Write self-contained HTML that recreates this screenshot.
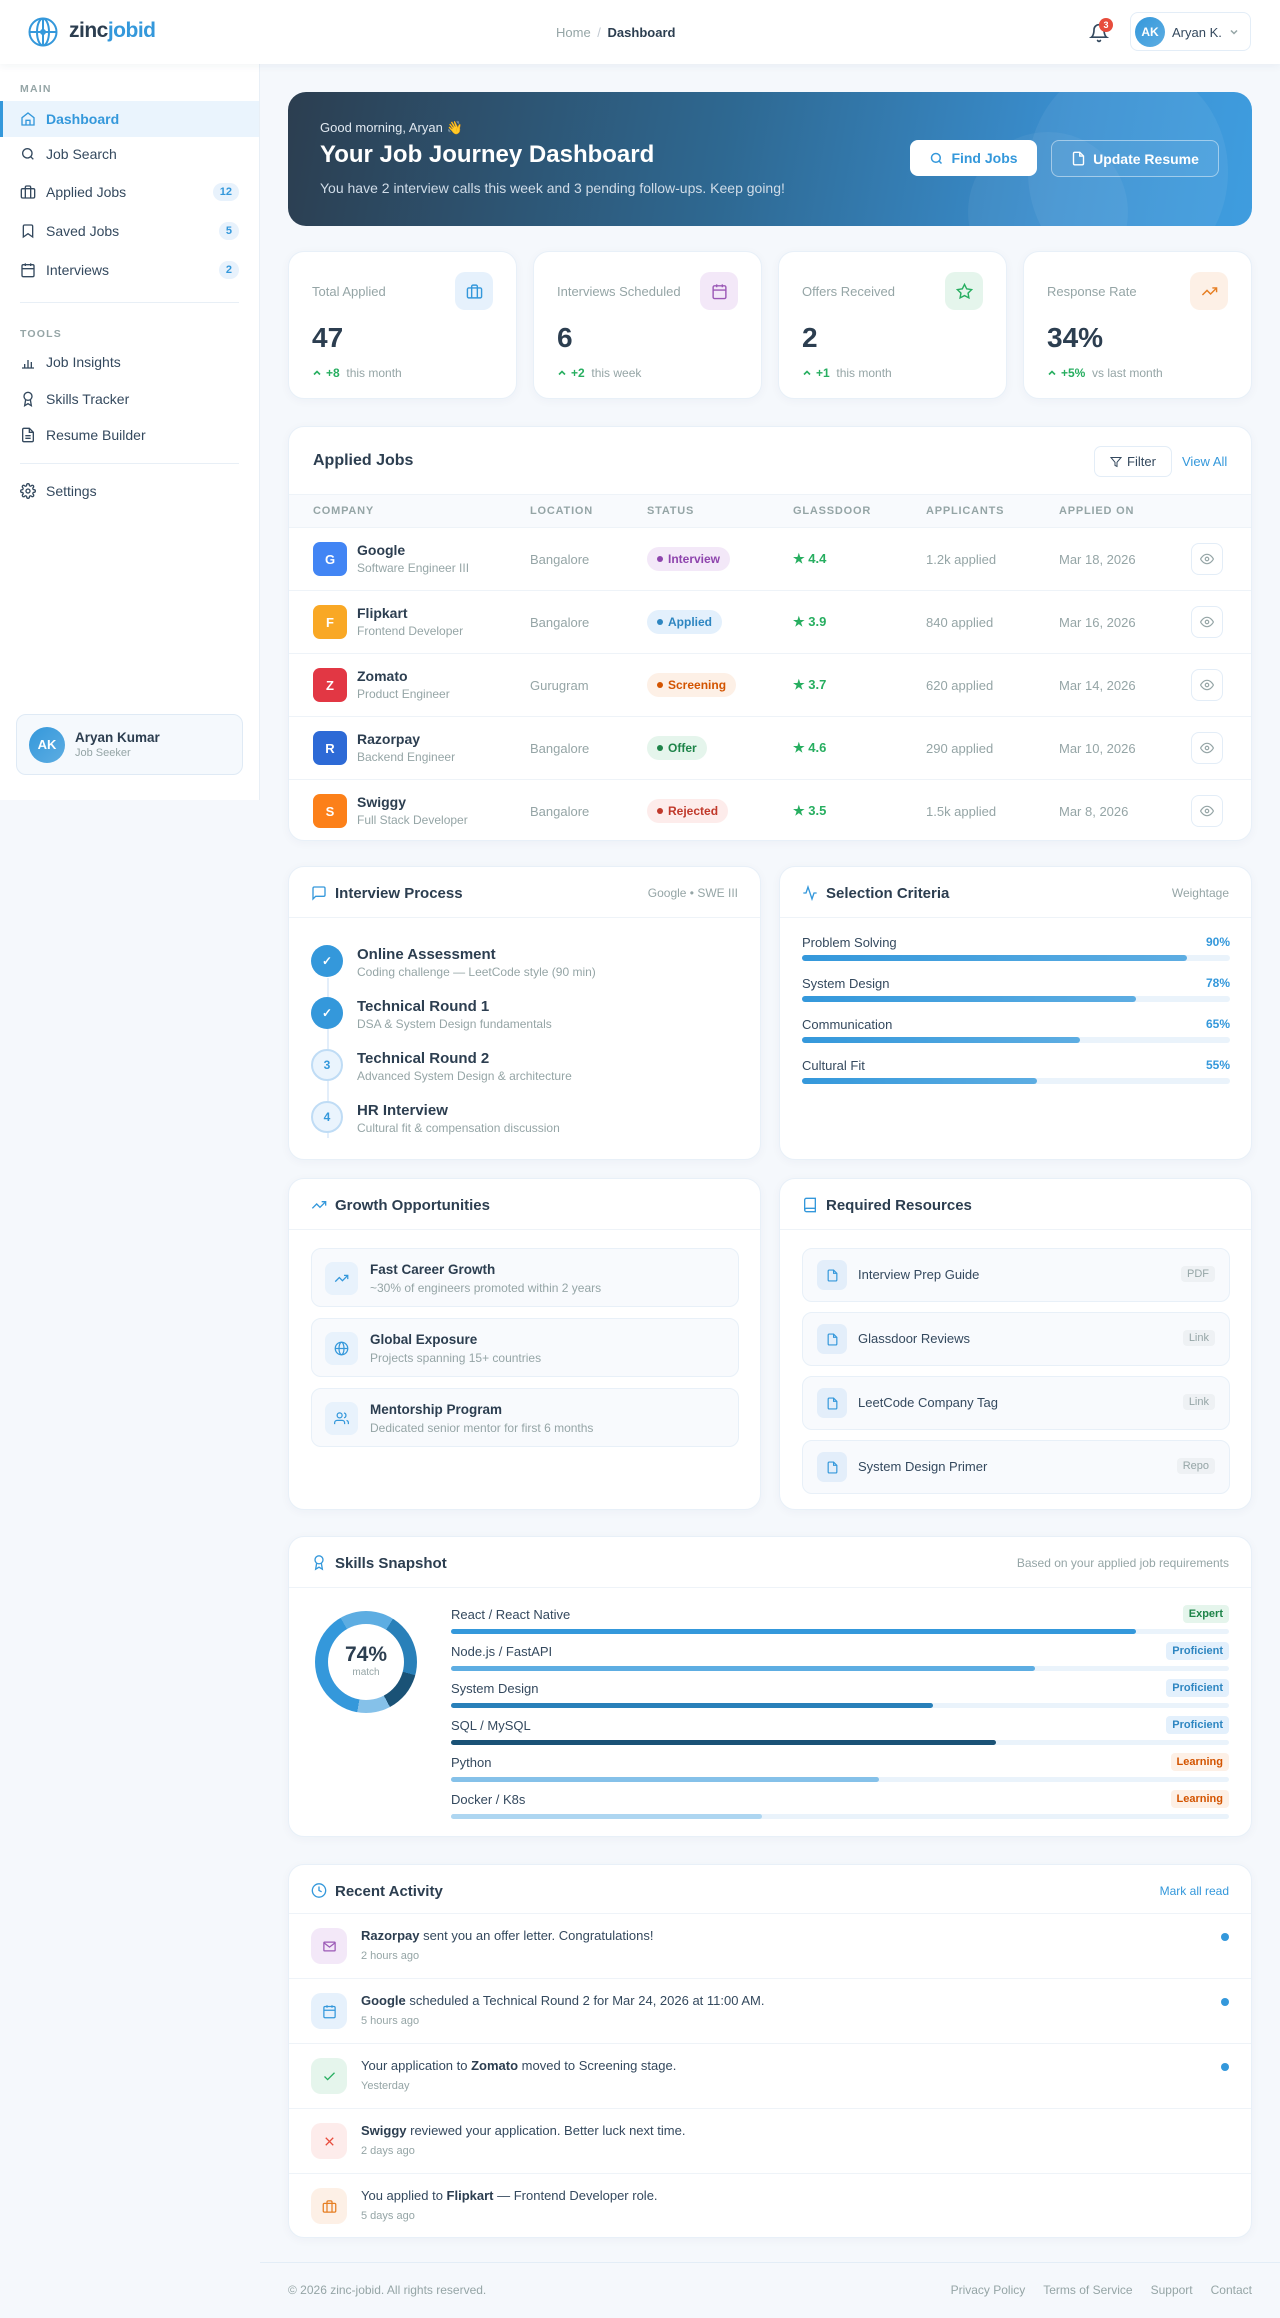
<!DOCTYPE html>
<html><head><meta charset="utf-8">
<style>
*{box-sizing:border-box;margin:0;padding:0}
body{width:1280px;height:2318px;background:#f5f8fc;font-family:"Liberation Sans",sans-serif;color:#2c3e50;position:relative;overflow:hidden}
.abs{position:absolute}
svg{display:block}
.hdr{left:0;top:0;width:1280px;height:64px;background:#fff;box-shadow:0 2px 8px rgba(30,60,100,.06);z-index:2}
.side{left:0;top:64px;width:260px;height:736px;background:#fff;border-right:1px solid #e8eff6}
.sec{left:20px;font-size:10.5px;font-weight:bold;letter-spacing:1.2px;color:#95a5a6}
.nav{left:0;width:259px;height:36px;display:flex;align-items:center;padding-left:20px;font-size:14px;color:#34495e}
.nav svg{margin-right:10px}
.nav .b{position:absolute;right:20px;background:#e8f2fc;color:#3498db;font-size:11px;font-weight:bold;border-radius:10px;padding:3px 7px}
.div{left:20px;width:219px;height:1px;background:#e8eff6}
.card{background:#fff;border:1px solid #e8f0f8;border-radius:16px;box-shadow:0 2px 10px rgba(30,60,100,.04)}
.stat{top:251px;width:229px;height:148px}
.stat .l{position:absolute;left:23px;top:32px;font-size:13px;color:#95a5a6}
.stat .n{position:absolute;left:23px;top:70px;font-size:28px;font-weight:bold;color:#2c3e50}
.stat .c{position:absolute;left:23px;top:114px;font-size:12px;color:#95a5a6;display:flex;align-items:center}
.stat .c b{color:#27ae60;margin-left:4px}
.stat .i{position:absolute;right:23px;top:20px;width:38px;height:38px;border-radius:10px;display:flex;align-items:center;justify-content:center}
.ch{font-size:16px;font-weight:bold;color:#2c3e50}
.th{font-size:11px;font-weight:bold;letter-spacing:.8px;color:#95a5a6}
.row{left:0;width:962px;height:63px;border-top:1px solid #eef3f8}
.row>div{position:absolute}
.logo{left:24px;top:14px;width:34px;height:34px;border-radius:7px;color:#fff;font-weight:bold;font-size:13px;display:flex;align-items:center;justify-content:center}
.cn{left:68px;top:14px;font-size:14px;font-weight:bold;color:#2c3e50}
.cr{left:68px;top:33px;font-size:12px;color:#95a5a6}
.loc{left:241px;top:24px;font-size:13px;color:#95a5a6}
.st{left:358px;top:19px;font-size:12px;font-weight:bold;border-radius:12px;padding:5px 10px 5px 10px}
.st:before{content:"";display:inline-block;width:6px;height:6px;border-radius:3px;background:currentColor;margin-right:5px;vertical-align:1px}
.gd{left:504px;top:23px;font-size:13px;font-weight:bold;color:#27ae60}
.ap{left:637px;top:24px;font-size:13px;color:#95a5a6}
.dt{left:770px;top:24px;font-size:13px;color:#95a5a6}
.eye{left:902px;top:15px;width:32px;height:32px;border:1px solid #e3edf7;border-radius:8px;display:flex;align-items:center;justify-content:center}
.half{width:473px}
.hb{position:absolute;left:0;right:0;top:50px;height:1px;background:#eef3f8}
.step .c{position:absolute;left:0;width:32px;height:32px;border-radius:16px;display:flex;align-items:center;justify-content:center;font-size:12px;font-weight:bold}
.step .t{position:absolute;left:46px;font-size:15px;font-weight:bold;color:#2c3e50}
.step .s{position:absolute;left:46px;font-size:12px;color:#95a5a6}
.crit{left:22px;width:428px}
.crit .l{position:absolute;left:0;top:0;font-size:13px;color:#34495e}
.crit .p{position:absolute;right:0;top:0;font-size:12px;font-weight:bold;color:#3498db}
.bar{position:absolute;left:0;right:0;height:6px;border-radius:3px;background:#eaf3fb}
.bar i{display:block;height:6px;border-radius:3px;background:linear-gradient(90deg,#3498db,#5dade2)}
.gi{left:22px;width:428px;height:59px;background:#f8fafd;border:1px solid #e8f0f8;border-radius:10px}
.gi .ic{position:absolute;left:13px;top:13px;width:33px;height:33px;border-radius:8px;background:#e8f2fc;display:flex;align-items:center;justify-content:center}
.gi .t{position:absolute;left:58px;top:13px;font-size:13.5px;font-weight:bold;color:#2c3e50}
.gi .s{position:absolute;left:58px;top:32px;font-size:12px;color:#95a5a6}
.ri{left:22px;width:428px;height:54px;background:#f8fafd;border:1px solid #e8f0f8;border-radius:10px}
.ri .ic{position:absolute;left:14px;top:11px;width:30px;height:30px;border-radius:7px;background:#e3eefa;display:flex;align-items:center;justify-content:center}
.ri .t{position:absolute;left:55px;top:18px;font-size:13px;color:#34495e}
.ri .tg{position:absolute;right:14px;top:17px;font-size:11px;color:#95a5a6;background:#eef1f4;border-radius:4px;padding:2px 6px}
.sk{left:162px;width:778px}
.sk .l{position:absolute;left:0;top:0;font-size:13px;color:#34495e}
.sk .tg{position:absolute;right:0;top:-2px;font-size:11px;font-weight:bold;border-radius:4px;padding:3px 6px}
.sk .bar{top:22px;height:5px}
.sk .bar i{height:5px}
.act{left:0;width:962px;height:65px;border-top:1px solid #eef3f8}
.act .ic{position:absolute;left:22px;top:14px;width:36px;height:36px;border-radius:10px;display:flex;align-items:center;justify-content:center}
.act .t{position:absolute;left:72px;top:14px;font-size:13px;color:#34495e}
.act .t b{color:#2c3e50}
.act .tm{position:absolute;left:72px;top:36px;font-size:11px;color:#95a5a6}
.act .dot{position:absolute;right:22px;top:19px;width:8px;height:8px;border-radius:4px;background:#3498db}
</style></head><body>

<div class="abs hdr">
  <svg class="abs" style="left:28px;top:17px" width="30" height="30" viewBox="0 0 30 30" fill="none" stroke="#3498db" stroke-width="2"><circle cx="15" cy="15" r="13.5"/><ellipse cx="15" cy="15" rx="6" ry="13.5"/><line x1="1.5" y1="15" x2="28.5" y2="15"/><line x1="15" y1="1.5" x2="15" y2="28.5"/><circle cx="15" cy="15" r="2" fill="#3498db"/></svg>
  <div class="abs" style="left:69px;top:19px;font-size:21px;font-weight:bold;color:#2c3e50;letter-spacing:-.5px">zinc<span style="color:#3498db">jobid</span></div>
  <div class="abs" style="left:556px;top:25px;font-size:13px;color:#95a5a6">Home <span style="color:#c0c8d0;margin:0 3px">/</span> <b style="color:#2c3e50">Dashboard</b></div>
  <svg class="abs" style="left:1089px;top:22px" width="20" height="22" viewBox="0 0 24 24" fill="none" stroke="#34495e" stroke-width="2" stroke-linecap="round"><path d="M6 8a6 6 0 0 1 12 0c0 7 3 9 3 9H3s3-2 3-9"/><path d="M10.3 21a1.9 1.9 0 0 0 3.4 0"/></svg>
  <div class="abs" style="left:1099px;top:18px;width:14px;height:14px;border-radius:7px;background:#e74c3c;color:#fff;font-size:9px;font-weight:bold;text-align:center;line-height:14px">3</div>
  <div class="abs" style="left:1130px;top:12px;width:121px;height:39px;border:1px solid #e3edf7;border-radius:8px"></div>
  <div class="abs" style="left:1135px;top:17px;width:30px;height:30px;border-radius:15px;background:linear-gradient(135deg,#3498db,#5dade2);color:#fff;font-size:12px;font-weight:bold;text-align:center;line-height:30px">AK</div>
  <div class="abs" style="left:1172px;top:25px;font-size:13px;color:#34495e">Aryan K.</div>
  <svg class="abs" style="left:1229px;top:27px" width="10" height="10" viewBox="0 0 10 10" fill="none" stroke="#95a5a6" stroke-width="1.5"><path d="M2 3.5l3 3 3-3"/></svg>
</div>

<div class="abs side"></div>
<div class="abs sec" style="top:83px">MAIN</div>
<div class="abs nav" style="top:101px;background:#eaf4fd;color:#3498db;font-weight:bold;border-left:3px solid #3498db;padding-left:17px"><svg width="16" height="16" viewBox="0 0 24 24" fill="none" stroke="#3498db" stroke-width="2"><path d="M3 10l9-7 9 7v11H3z"/><path d="M9 21v-7h6v7"/></svg>Dashboard</div>
<div class="abs nav" style="top:136px"><svg width="16" height="16" viewBox="0 0 24 24" fill="none" stroke="#34495e" stroke-width="2"><circle cx="11" cy="11" r="7"/><path d="M20 20l-4-4"/></svg>Job Search</div>
<div class="abs nav" style="top:174px"><svg width="16" height="16" viewBox="0 0 24 24" fill="none" stroke="#34495e" stroke-width="2"><rect x="2" y="7" width="20" height="14" rx="2"/><path d="M16 21V5a2 2 0 0 0-2-2h-4a2 2 0 0 0-2 2v16"/></svg>Applied Jobs<span class="b">12</span></div>
<div class="abs nav" style="top:213px"><svg width="16" height="16" viewBox="0 0 24 24" fill="none" stroke="#34495e" stroke-width="2"><path d="M19 21l-7-5-7 5V5a2 2 0 0 1 2-2h10a2 2 0 0 1 2 2z"/></svg>Saved Jobs<span class="b">5</span></div>
<div class="abs nav" style="top:252px"><svg width="16" height="16" viewBox="0 0 24 24" fill="none" stroke="#34495e" stroke-width="2"><rect x="3" y="4" width="18" height="18" rx="2"/><path d="M16 2v4M8 2v4M3 10h18"/></svg>Interviews<span class="b">2</span></div>
<div class="abs div" style="top:302px"></div>
<div class="abs sec" style="top:328px">TOOLS</div>
<div class="abs nav" style="top:344px"><svg width="16" height="16" viewBox="0 0 24 24" fill="none" stroke="#34495e" stroke-width="2"><path d="M3 21h18M7 21v-6M12 21V9M17 21v-9"/></svg>Job Insights</div>
<div class="abs nav" style="top:381px"><svg width="16" height="16" viewBox="0 0 24 24" fill="none" stroke="#34495e" stroke-width="2"><circle cx="12" cy="8" r="6"/><path d="M8.5 13L7 22l5-3 5 3-1.5-9"/></svg>Skills Tracker</div>
<div class="abs nav" style="top:417px"><svg width="16" height="16" viewBox="0 0 24 24" fill="none" stroke="#34495e" stroke-width="2"><path d="M14 2H6a2 2 0 0 0-2 2v16a2 2 0 0 0 2 2h12a2 2 0 0 0 2-2V8z"/><path d="M14 2v6h6M8 13h8M8 17h8"/></svg>Resume Builder</div>
<div class="abs div" style="top:463px"></div>
<div class="abs nav" style="top:473px"><svg width="16" height="16" viewBox="0 0 24 24" fill="none" stroke="#34495e" stroke-width="2"><circle cx="12" cy="12" r="3"/><path d="M19.4 15a1.7 1.7 0 0 0 .3 1.8l.1.1a2 2 0 1 1-2.8 2.8l-.1-.1a1.7 1.7 0 0 0-1.8-.3 1.7 1.7 0 0 0-1 1.5V21a2 2 0 1 1-4 0v-.1a1.7 1.7 0 0 0-1.1-1.5 1.7 1.7 0 0 0-1.8.3l-.1.1a2 2 0 1 1-2.8-2.8l.1-.1a1.7 1.7 0 0 0 .3-1.8 1.7 1.7 0 0 0-1.5-1H3a2 2 0 1 1 0-4h.1a1.7 1.7 0 0 0 1.5-1.1 1.7 1.7 0 0 0-.3-1.8l-.1-.1a2 2 0 1 1 2.8-2.8l.1.1a1.7 1.7 0 0 0 1.8.3H9a1.7 1.7 0 0 0 1-1.5V3a2 2 0 1 1 4 0v.1a1.7 1.7 0 0 0 1 1.5 1.7 1.7 0 0 0 1.8-.3l.1-.1a2 2 0 1 1 2.8 2.8l-.1.1a1.7 1.7 0 0 0-.3 1.8V9a1.7 1.7 0 0 0 1.5 1H21a2 2 0 1 1 0 4h-.1a1.7 1.7 0 0 0-1.5 1z"/></svg>Settings</div>
<div class="abs" style="left:16px;top:714px;width:227px;height:61px;background:#f5f9fd;border:1px solid #dfeaf5;border-radius:10px">
  <div class="abs" style="left:12px;top:12px;width:36px;height:36px;border-radius:18px;background:linear-gradient(135deg,#3498db,#5dade2);color:#fff;font-weight:bold;font-size:13px;text-align:center;line-height:36px">AK</div>
  <div class="abs" style="left:58px;top:15px;font-size:13.5px;font-weight:bold;color:#2c3e50">Aryan Kumar</div>
  <div class="abs" style="left:58px;top:32px;font-size:11px;color:#95a5a6">Job Seeker</div>
</div>

<!-- hero -->
<div class="abs" style="left:288px;top:92px;width:964px;height:134px;border-radius:18px;overflow:hidden;background:linear-gradient(100deg,#2c3e50 0%,#2e6891 45%,#3a8fd0 80%,#3f9ddf 100%)">
  <div class="abs" style="left:740px;top:-30px;width:200px;height:220px;border-radius:50%;background:rgba(255,255,255,.06)"></div>
  <div class="abs" style="left:680px;top:40px;width:160px;height:160px;border-radius:50%;background:rgba(255,255,255,.05)"></div>
  <div class="abs" style="left:32px;top:28px;font-size:13px;color:#e0e8f0">Good morning, Aryan 👋</div>
  <div class="abs" style="left:32px;top:49px;font-size:24px;font-weight:bold;color:#fff">Your Job Journey Dashboard</div>
  <div class="abs" style="left:32px;top:88px;font-size:14px;color:#d0dce8">You have 2 interview calls this week and 3 pending follow-ups. Keep going!</div>
  <div class="abs" style="left:622px;top:48px;width:127px;height:36px;background:#fff;border-radius:8px;color:#3498db;font-size:14px;font-weight:bold;display:flex;align-items:center;justify-content:center"><svg width="15" height="15" viewBox="0 0 24 24" fill="none" stroke="#3498db" stroke-width="2.4" style="margin-right:7px"><circle cx="11" cy="11" r="7"/><path d="M20 20l-4-4"/></svg>Find Jobs</div>
  <div class="abs" style="left:763px;top:48px;width:168px;height:37px;border:1px solid rgba(255,255,255,.45);border-radius:8px;color:#fff;font-size:14px;font-weight:bold;display:flex;align-items:center;justify-content:center;background:rgba(255,255,255,.06)"><svg width="15" height="15" viewBox="0 0 24 24" fill="none" stroke="#fff" stroke-width="2.2" style="margin-right:7px"><path d="M14 2H6a2 2 0 0 0-2 2v16a2 2 0 0 0 2 2h12a2 2 0 0 0 2-2V8z"/><path d="M14 2v6h6"/></svg>Update Resume</div>
</div>

<!-- stats -->
<div class="abs card stat" style="left:288px"><div class="l">Total Applied</div><div class="n">47</div><div class="c"><svg width="10" height="10" viewBox="0 0 10 10" fill="none" stroke="#27ae60" stroke-width="1.6"><path d="M2 6.5l3-3 3 3"/></svg><b>+8</b>&nbsp; this month</div><div class="i" style="background:#e6f1fc"><svg width="17" height="17" viewBox="0 0 24 24" fill="none" stroke="#3498db" stroke-width="2"><rect x="2" y="7" width="20" height="14" rx="2"/><path d="M16 21V5a2 2 0 0 0-2-2h-4a2 2 0 0 0-2 2v16"/></svg></div></div>
<div class="abs card stat" style="left:533px"><div class="l">Interviews Scheduled</div><div class="n">6</div><div class="c"><svg width="10" height="10" viewBox="0 0 10 10" fill="none" stroke="#27ae60" stroke-width="1.6"><path d="M2 6.5l3-3 3 3"/></svg><b>+2</b>&nbsp; this week</div><div class="i" style="background:#f3e8f8"><svg width="17" height="17" viewBox="0 0 24 24" fill="none" stroke="#9b59b6" stroke-width="2"><rect x="3" y="4" width="18" height="18" rx="2"/><path d="M16 2v4M8 2v4M3 10h18"/></svg></div></div>
<div class="abs card stat" style="left:778px"><div class="l">Offers Received</div><div class="n">2</div><div class="c"><svg width="10" height="10" viewBox="0 0 10 10" fill="none" stroke="#27ae60" stroke-width="1.6"><path d="M2 6.5l3-3 3 3"/></svg><b>+1</b>&nbsp; this month</div><div class="i" style="background:#e5f5ec"><svg width="17" height="17" viewBox="0 0 24 24" fill="none" stroke="#27ae60" stroke-width="2"><path d="M12 2l3.1 6.3 6.9 1-5 4.9 1.2 6.8L12 17.8 5.8 21l1.2-6.8-5-4.9 6.9-1z"/></svg></div></div>
<div class="abs card stat" style="left:1023px"><div class="l">Response Rate</div><div class="n">34%</div><div class="c"><svg width="10" height="10" viewBox="0 0 10 10" fill="none" stroke="#27ae60" stroke-width="1.6"><path d="M2 6.5l3-3 3 3"/></svg><b>+5%</b>&nbsp; vs last month</div><div class="i" style="background:#fdf0e6"><svg width="17" height="17" viewBox="0 0 24 24" fill="none" stroke="#e67e22" stroke-width="2"><path d="M22 7l-8.5 8.5-5-5L2 17"/><path d="M16 7h6v6"/></svg></div></div>

<!-- applied jobs -->
<div class="abs card" style="left:288px;top:426px;width:964px;height:415px;overflow:hidden">
  <div class="abs ch" style="left:24px;top:25px">Applied Jobs</div>
  <div class="abs" style="left:805px;top:19px;width:78px;height:31px;border:1px solid #e3edf7;border-radius:7px;font-size:13px;color:#34495e;display:flex;align-items:center;justify-content:center"><svg width="12" height="12" viewBox="0 0 24 24" fill="none" stroke="#34495e" stroke-width="2" style="margin-right:5px"><path d="M22 3H2l8 9.5V19l4 2v-8.5z"/></svg>Filter</div>
  <div class="abs" style="left:893px;top:27px;font-size:13px;color:#3498db">View All</div>
  <div class="abs" style="left:0;top:67px;width:964px;height:33px;background:#f8fafd;border-top:1px solid #eef3f8"></div>
  <div class="abs th" style="left:24px;top:78px">COMPANY</div>
  <div class="abs th" style="left:241px;top:78px">LOCATION</div>
  <div class="abs th" style="left:358px;top:78px">STATUS</div>
  <div class="abs th" style="left:504px;top:78px">GLASSDOOR</div>
  <div class="abs th" style="left:637px;top:78px">APPLICANTS</div>
  <div class="abs th" style="left:770px;top:78px">APPLIED ON</div>
  <div class="abs row" style="top:100px"><div class="logo" style="background:#4285f4">G</div><div class="cn">Google</div><div class="cr">Software Engineer III</div><div class="loc">Bangalore</div><div class="st" style="background:#f3e8f8;color:#8e44ad">Interview</div><div class="gd">★ 4.4</div><div class="ap">1.2k applied</div><div class="dt">Mar 18, 2026</div><div class="eye"><svg width="14" height="14" viewBox="0 0 24 24" fill="none" stroke="#95a5a6" stroke-width="2"><path d="M1 12s4-8 11-8 11 8 11 8-4 8-11 8-11-8-11-8z"/><circle cx="12" cy="12" r="3"/></svg></div></div>
  <div class="abs row" style="top:163px"><div class="logo" style="background:#f9a825">F</div><div class="cn">Flipkart</div><div class="cr">Frontend Developer</div><div class="loc">Bangalore</div><div class="st" style="background:#e3f0fc;color:#2e86c1">Applied</div><div class="gd">★ 3.9</div><div class="ap">840 applied</div><div class="dt">Mar 16, 2026</div><div class="eye"><svg width="14" height="14" viewBox="0 0 24 24" fill="none" stroke="#95a5a6" stroke-width="2"><path d="M1 12s4-8 11-8 11 8 11 8-4 8-11 8-11-8-11-8z"/><circle cx="12" cy="12" r="3"/></svg></div></div>
  <div class="abs row" style="top:226px"><div class="logo" style="background:#e23744">Z</div><div class="cn">Zomato</div><div class="cr">Product Engineer</div><div class="loc">Gurugram</div><div class="st" style="background:#fdf0e6;color:#d35400">Screening</div><div class="gd">★ 3.7</div><div class="ap">620 applied</div><div class="dt">Mar 14, 2026</div><div class="eye"><svg width="14" height="14" viewBox="0 0 24 24" fill="none" stroke="#95a5a6" stroke-width="2"><path d="M1 12s4-8 11-8 11 8 11 8-4 8-11 8-11-8-11-8z"/><circle cx="12" cy="12" r="3"/></svg></div></div>
  <div class="abs row" style="top:289px"><div class="logo" style="background:#2d6ad6">R</div><div class="cn">Razorpay</div><div class="cr">Backend Engineer</div><div class="loc">Bangalore</div><div class="st" style="background:#e5f5ec;color:#1e8449">Offer</div><div class="gd">★ 4.6</div><div class="ap">290 applied</div><div class="dt">Mar 10, 2026</div><div class="eye"><svg width="14" height="14" viewBox="0 0 24 24" fill="none" stroke="#95a5a6" stroke-width="2"><path d="M1 12s4-8 11-8 11 8 11 8-4 8-11 8-11-8-11-8z"/><circle cx="12" cy="12" r="3"/></svg></div></div>
  <div class="abs row" style="top:352px"><div class="logo" style="background:#fc8019">S</div><div class="cn">Swiggy</div><div class="cr">Full Stack Developer</div><div class="loc">Bangalore</div><div class="st" style="background:#fdeceb;color:#c0392b">Rejected</div><div class="gd">★ 3.5</div><div class="ap">1.5k applied</div><div class="dt">Mar 8, 2026</div><div class="eye"><svg width="14" height="14" viewBox="0 0 24 24" fill="none" stroke="#95a5a6" stroke-width="2"><path d="M1 12s4-8 11-8 11 8 11 8-4 8-11 8-11-8-11-8z"/><circle cx="12" cy="12" r="3"/></svg></div></div>
</div>

<!-- interview process -->
<div class="abs card half" style="left:288px;top:866px;height:294px">
  <svg class="abs" style="left:22px;top:18px" width="16" height="16" viewBox="0 0 24 24" fill="none" stroke="#3498db" stroke-width="2"><path d="M21 15a2 2 0 0 1-2 2H7l-4 4V5a2 2 0 0 1 2-2h14a2 2 0 0 1 2 2z"/></svg>
  <div class="abs ch" style="left:46px;top:18px;font-size:15px">Interview Process</div>
  <div class="abs" style="right:22px;top:19px;font-size:12px;color:#95a5a6">Google • SWE III</div>
  <div class="hb"></div>
  <div class="abs" style="left:38px;top:111px;width:2px;height:160px;background:#e3eefa"></div>
  <div class="abs step" style="left:22px;top:78px;width:420px"><div class="c" style="background:#3498db;color:#fff">✓</div><div class="t" style="top:1px">Online Assessment</div><div class="s" style="top:20px">Coding challenge — LeetCode style (90 min)</div></div>
  <div class="abs step" style="left:22px;top:130px;width:420px"><div class="c" style="background:#3498db;color:#fff">✓</div><div class="t" style="top:1px">Technical Round 1</div><div class="s" style="top:20px">DSA &amp; System Design fundamentals</div></div>
  <div class="abs step" style="left:22px;top:182px;width:420px"><div class="c" style="background:#eaf4fd;border:2px solid #bfdcf5;color:#3498db">3</div><div class="t" style="top:1px">Technical Round 2</div><div class="s" style="top:20px">Advanced System Design &amp; architecture</div></div>
  <div class="abs step" style="left:22px;top:234px;width:420px"><div class="c" style="background:#eaf4fd;border:2px solid #bfdcf5;color:#3498db">4</div><div class="t" style="top:1px">HR Interview</div><div class="s" style="top:20px">Cultural fit &amp; compensation discussion</div></div>
</div>

<!-- selection criteria -->
<div class="abs card half" style="left:779px;top:866px;height:294px">
  <svg class="abs" style="left:22px;top:18px" width="16" height="16" viewBox="0 0 24 24" fill="none" stroke="#3498db" stroke-width="2"><path d="M22 12h-4l-3 9L9 3l-3 9H2"/></svg>
  <div class="abs ch" style="left:46px;top:18px;font-size:15px">Selection Criteria</div>
  <div class="abs" style="right:22px;top:19px;font-size:12px;color:#95a5a6">Weightage</div>
  <div class="hb"></div>
  <div class="abs crit" style="top:68px"><div class="l">Problem Solving</div><div class="p">90%</div><div class="bar" style="top:20px"><i style="width:90%"></i></div></div>
  <div class="abs crit" style="top:109px"><div class="l">System Design</div><div class="p">78%</div><div class="bar" style="top:20px"><i style="width:78%"></i></div></div>
  <div class="abs crit" style="top:150px"><div class="l">Communication</div><div class="p">65%</div><div class="bar" style="top:20px"><i style="width:65%"></i></div></div>
  <div class="abs crit" style="top:191px"><div class="l">Cultural Fit</div><div class="p">55%</div><div class="bar" style="top:20px"><i style="width:55%"></i></div></div>
</div>

<!-- growth -->
<div class="abs card half" style="left:288px;top:1178px;height:332px">
  <svg class="abs" style="left:22px;top:18px" width="16" height="16" viewBox="0 0 24 24" fill="none" stroke="#3498db" stroke-width="2"><path d="M22 7l-8.5 8.5-5-5L2 17"/><path d="M16 7h6v6"/></svg>
  <div class="abs ch" style="left:46px;top:18px;font-size:15px">Growth Opportunities</div>
  <div class="hb"></div>
  <div class="abs gi" style="top:69px"><div class="ic"><svg width="15" height="15" viewBox="0 0 24 24" fill="none" stroke="#3498db" stroke-width="2"><path d="M22 7l-8.5 8.5-5-5L2 17"/><path d="M16 7h6v6"/></svg></div><div class="t">Fast Career Growth</div><div class="s">~30% of engineers promoted within 2 years</div></div>
  <div class="abs gi" style="top:139px"><div class="ic"><svg width="15" height="15" viewBox="0 0 24 24" fill="none" stroke="#3498db" stroke-width="2"><circle cx="12" cy="12" r="10"/><path d="M2 12h20"/><ellipse cx="12" cy="12" rx="4" ry="10"/></svg></div><div class="t">Global Exposure</div><div class="s">Projects spanning 15+ countries</div></div>
  <div class="abs gi" style="top:209px"><div class="ic"><svg width="15" height="15" viewBox="0 0 24 24" fill="none" stroke="#3498db" stroke-width="2"><circle cx="9" cy="7" r="4"/><path d="M1 21v-2a4 4 0 0 1 4-4h8a4 4 0 0 1 4 4v2M16 3.1a4 4 0 0 1 0 7.8M23 21v-2a4 4 0 0 0-3-3.9"/></svg></div><div class="t">Mentorship Program</div><div class="s">Dedicated senior mentor for first 6 months</div></div>
</div>

<!-- resources -->
<div class="abs card half" style="left:779px;top:1178px;height:332px">
  <svg class="abs" style="left:22px;top:18px" width="16" height="16" viewBox="0 0 24 24" fill="none" stroke="#3498db" stroke-width="2"><path d="M4 19.5A2.5 2.5 0 0 1 6.5 17H20V2H6.5A2.5 2.5 0 0 0 4 4.5z"/><path d="M4 19.5A2.5 2.5 0 0 0 6.5 22H20v-5"/></svg>
  <div class="abs ch" style="left:46px;top:18px;font-size:15px">Required Resources</div>
  <div class="hb"></div>
  <div class="abs ri" style="top:69px"><div class="ic"><svg width="13" height="13" viewBox="0 0 24 24" fill="none" stroke="#3498db" stroke-width="2.2"><path d="M14 2H6a2 2 0 0 0-2 2v16a2 2 0 0 0 2 2h12a2 2 0 0 0 2-2V8z"/><path d="M14 2v6h6"/></svg></div><div class="t">Interview Prep Guide</div><div class="tg">PDF</div></div>
  <div class="abs ri" style="top:133px"><div class="ic"><svg width="13" height="13" viewBox="0 0 24 24" fill="none" stroke="#3498db" stroke-width="2.2"><path d="M14 2H6a2 2 0 0 0-2 2v16a2 2 0 0 0 2 2h12a2 2 0 0 0 2-2V8z"/><path d="M14 2v6h6"/></svg></div><div class="t">Glassdoor Reviews</div><div class="tg">Link</div></div>
  <div class="abs ri" style="top:197px"><div class="ic"><svg width="13" height="13" viewBox="0 0 24 24" fill="none" stroke="#3498db" stroke-width="2.2"><path d="M14 2H6a2 2 0 0 0-2 2v16a2 2 0 0 0 2 2h12a2 2 0 0 0 2-2V8z"/><path d="M14 2v6h6"/></svg></div><div class="t">LeetCode Company Tag</div><div class="tg">Link</div></div>
  <div class="abs ri" style="top:261px"><div class="ic"><svg width="13" height="13" viewBox="0 0 24 24" fill="none" stroke="#3498db" stroke-width="2.2"><path d="M14 2H6a2 2 0 0 0-2 2v16a2 2 0 0 0 2 2h12a2 2 0 0 0 2-2V8z"/><path d="M14 2v6h6"/></svg></div><div class="t">System Design Primer</div><div class="tg">Repo</div></div>
</div>

<!-- skills -->
<div class="abs card" style="left:288px;top:1536px;width:964px;height:301px">
  <svg class="abs" style="left:22px;top:17px" width="16" height="17" viewBox="0 0 24 24" fill="none" stroke="#3498db" stroke-width="2"><circle cx="12" cy="8" r="6"/><path d="M8.5 13L7 22l5-3 5 3-1.5-9"/></svg>
  <div class="abs ch" style="left:46px;top:18px;font-size:15px">Skills Snapshot</div>
  <div class="abs" style="right:22px;top:19px;font-size:12px;color:#95a5a6">Based on your applied job requirements</div>
  <div class="hb"></div>
  <div class="abs" style="left:26px;top:74px;width:102px;height:102px;border-radius:51px;background:conic-gradient(#5dade2 0deg 32deg,#2980b9 32deg 105deg,#1a5276 105deg 152deg,#85c1e9 152deg 190deg,#3498db 190deg 330deg,#5dade2 330deg 360deg)"></div>
  <div class="abs" style="left:39px;top:87px;width:76px;height:76px;border-radius:38px;background:#fff"></div>
  <div class="abs" style="left:26px;top:106px;width:102px;text-align:center;font-size:21px;font-weight:bold;color:#2c3e50">74%</div>
  <div class="abs" style="left:26px;top:130px;width:102px;text-align:center;font-size:10px;color:#95a5a6">match</div>
  <div class="abs sk" style="top:70px"><div class="l">React / React Native</div><div class="tg" style="background:#e5f5ec;color:#1e8449">Expert</div><div class="bar"><i style="width:88%;background:#3498db"></i></div></div>
  <div class="abs sk" style="top:107px"><div class="l">Node.js / FastAPI</div><div class="tg" style="background:#e3f0fc;color:#2e86c1">Proficient</div><div class="bar"><i style="width:75%;background:#5dade2"></i></div></div>
  <div class="abs sk" style="top:144px"><div class="l">System Design</div><div class="tg" style="background:#e3f0fc;color:#2e86c1">Proficient</div><div class="bar"><i style="width:62%;background:#2980b9"></i></div></div>
  <div class="abs sk" style="top:181px"><div class="l">SQL / MySQL</div><div class="tg" style="background:#e3f0fc;color:#2e86c1">Proficient</div><div class="bar"><i style="width:70%;background:#1a5276"></i></div></div>
  <div class="abs sk" style="top:218px"><div class="l">Python</div><div class="tg" style="background:#fdf0e6;color:#d35400">Learning</div><div class="bar"><i style="width:55%;background:#85c1e9"></i></div></div>
  <div class="abs sk" style="top:255px"><div class="l">Docker / K8s</div><div class="tg" style="background:#fdf0e6;color:#d35400">Learning</div><div class="bar"><i style="width:40%;background:#aed6f1"></i></div></div>
</div>

<!-- recent -->
<div class="abs card" style="left:288px;top:1864px;width:964px;height:374px;overflow:hidden">
  <svg class="abs" style="left:22px;top:17px" width="16" height="17" viewBox="0 0 24 24" fill="none" stroke="#3498db" stroke-width="2"><circle cx="12" cy="12" r="10"/><path d="M12 6v6l4 2"/></svg>
  <div class="abs ch" style="left:46px;top:18px;font-size:15px">Recent Activity</div>
  <div class="abs" style="right:22px;top:19px;font-size:12px;color:#3498db">Mark all read</div>
  <div class="abs act" style="top:48px"><div class="ic" style="background:#f3e8f8"><svg width="15" height="15" viewBox="0 0 24 24" fill="none" stroke="#9b59b6" stroke-width="2"><rect x="3" y="5" width="18" height="14" rx="1"/><path d="M3 6l9 7 9-7"/></svg></div><div class="t"><b>Razorpay</b> sent you an offer letter. Congratulations!</div><div class="tm">2 hours ago</div><div class="dot"></div></div>
  <div class="abs act" style="top:113px"><div class="ic" style="background:#e6f1fc"><svg width="15" height="15" viewBox="0 0 24 24" fill="none" stroke="#3498db" stroke-width="2"><rect x="3" y="4" width="18" height="18" rx="2"/><path d="M16 2v4M8 2v4M3 10h18"/></svg></div><div class="t"><b>Google</b> scheduled a Technical Round 2 for Mar 24, 2026 at 11:00 AM.</div><div class="tm">5 hours ago</div><div class="dot"></div></div>
  <div class="abs act" style="top:178px"><div class="ic" style="background:#e5f5ec"><svg width="15" height="15" viewBox="0 0 24 24" fill="none" stroke="#27ae60" stroke-width="2"><path d="M20 6L9 17l-5-5"/></svg></div><div class="t">Your application to <b>Zomato</b> moved to Screening stage.</div><div class="tm">Yesterday</div><div class="dot"></div></div>
  <div class="abs act" style="top:243px"><div class="ic" style="background:#fdeceb"><svg width="15" height="15" viewBox="0 0 24 24" fill="none" stroke="#e74c3c" stroke-width="2"><path d="M18 6L6 18M6 6l12 12"/></svg></div><div class="t"><b>Swiggy</b> reviewed your application. Better luck next time.</div><div class="tm">2 days ago</div></div>
  <div class="abs act" style="top:308px"><div class="ic" style="background:#fdf0e6"><svg width="15" height="15" viewBox="0 0 24 24" fill="none" stroke="#e67e22" stroke-width="2"><rect x="2" y="7" width="20" height="14" rx="2"/><path d="M16 21V5a2 2 0 0 0-2-2h-4a2 2 0 0 0-2 2v16"/></svg></div><div class="t">You applied to <b>Flipkart</b> — Frontend Developer role.</div><div class="tm">5 days ago</div></div>
</div>

<!-- footer -->
<div class="abs" style="left:260px;top:2262px;width:1020px;height:1px;background:#e3edf7"></div>
<div class="abs" style="left:288px;top:2283px;font-size:12px;color:#95a5a6">© 2026 zinc-jobid. All rights reserved.</div>
<div class="abs" style="right:28px;top:2283px;font-size:12px;color:#95a5a6;word-spacing:0">Privacy Policy<span style="margin-left:18px">Terms of Service</span><span style="margin-left:18px">Support</span><span style="margin-left:18px">Contact</span></div>
</body></html>
